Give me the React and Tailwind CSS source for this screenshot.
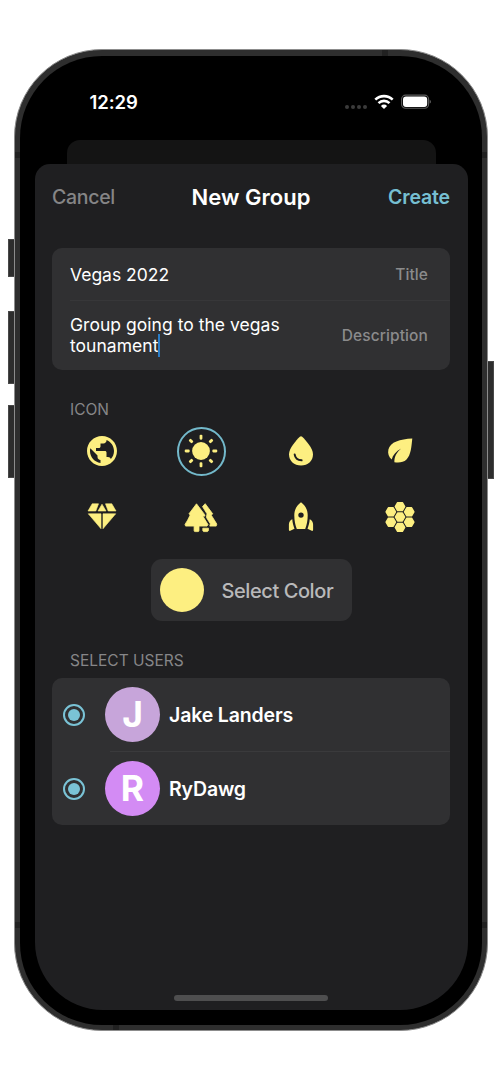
import { MdPublic } from "react-icons/md";

const FONT = "font-[Inter,'Liberation_Sans',sans-serif]";

function SunIcon() {
  return (
    <svg width="36" height="36" viewBox="-18 -18 36 36" fill="currentColor">
      <circle r="8.9" />
      {[0, 90, 180, 270].map((a) => (
        <rect key={a} x="-1.4" y="-16.3" width="2.8" height="5" rx="1.1" transform={`rotate(${a})`} />
      ))}
      {[45, 135, 225, 315].map((a) => (
        <rect key={a} x="-1.5" y="-16.3" width="3" height="4.4" rx="1.1" transform={`rotate(${a})`} />
      ))}
    </svg>
  );
}

function DropIcon() {
  return (
    <svg width="36" height="36" viewBox="-18 -18 36 36">
      <path
        fill="currentColor"
        d="M-1.2-14.2Q0-15.2 1.2-14.2C5-10.4 12-2.6 12 3.2C12 10 6.8 14.5 0 14.5S-12 10-12 3.2C-12-2.6-5-10.4-1.2-14.2Z"
      />
      <path d="M-6.3 3.6C-5.8 7-3.200 9 .6 9.300" fill="none" stroke="#1f1f21" strokeWidth="2" strokeLinecap="round" />
    </svg>
  );
}

function LeafIcon() {
  return (
    <svg width="36" height="36" viewBox="-18 -18 36 36">
      <path
        fill="currentColor"
        d="M12.300-12.500C11.500-5 11 4 6.500 8.500C3.500 11.500-1 11.800-5.600 11.200C-5.800 5.500-3.500 1.500 1.200-2.600C-4 .2-7.200 4-8.300 8.500C-11.200 6-12.500 2.500-11.600-1.500C-9.800-9 0-12 12.300-12.500Z"
      />
    </svg>
  );
}

function DiamondIcon() {
  return (
    <svg width="36" height="36" viewBox="-18 -18 36 36" fill="currentColor" stroke="currentColor" strokeWidth=".6" strokeLinejoin="round">
      <path d="M-9.800-13.200H-3.500L-6.200-6H-14Z" />
      <path d="M0-12.800L4-6H-4Z" />
      <path d="M3.500-13.200H9.800L14-6H6.200Z" />
      <path d="M-13.700-3.200H-1V11.700Z" />
      <path d="M1-3.200H13.700L1 11.700Z" />
    </svg>
  );
}

function TreesIcon() {
  return (
    <svg width="36" height="36" viewBox="-18 -18.600 36 36" fill="currentColor" stroke="currentColor" strokeWidth=".8" strokeLinejoin="round">
      <path d="M-4.500-13.800L-12-3.800L-10.800-2.600C-12.500 1-14 4-16 6.800L-15.400 8.500H-6.900V13Q-6.900 14-5.900 14H-3Q-2 14-2 13V8.500H6L7 7L1.800-1.500H4L3.500-3.200Z" />
      <path d="M1.500-11L4.200-13.900L11.700-3.800L10.300-2.400L15.800 6.500L15.200 8.500H8.800L9.300 6.200L5.400-.2L6-3.800Z" />
      <path d="M1.800 10.600H7.400V13L6.500 14H2.500L1.800 13Z" />
    </svg>
  );
}

function RocketIcon() {
  return (
    <svg width="36" height="36" viewBox="-18 -18 36 36" fill="currentColor">
      <path
        fillRule="evenodd"
        d="M0-14.800C4.500-11.500 6.700-7 6.700-1.500C6.700 4 5.700 8 4.200 12H-4.200C-5.700 8-6.700 4-6.700-1.500C-6.700-7-4.500-11.500 0-14.800ZM0-4.600A2.700 2.700 0 1 0 0 .8A2.700 2.700 0 1 0 0-4.600Z"
      />
      <path d="M-8.700 2.200C-8.500 5.400-7.700 8.500-6.500 11.700L-10.700 13.800Q-12.100 14.300-12.100 12.800V7.500C-12.100 4.800-10.700 3-8.700 2.200Z" />
      <path d="M8.700 2.200C8.500 5.400 7.700 8.500 6.500 11.700L10.700 13.800Q12.100 14.300 12.100 12.800V7.500C12.100 4.800 10.700 3 8.700 2.200Z" />
    </svg>
  );
}

function HoneycombIcon() {
  const cells = [[0, -10.4], [0, 0], [0, 10.4], [-9.2, -5.2], [-9.2, 5.2], [9.2, -5.2], [9.2, 5.2]];
  return (
    <svg width="36" height="36" viewBox="-18 -18 36 36" fill="currentColor" stroke="currentColor" strokeWidth="1.400" strokeLinejoin="round">
      {cells.map(([x, y]) => (
        <path key={`${x},${y}`} transform={`translate(${x} ${y})`} d="M-4.700 0L-2.400-4H2.400L4.700 0L2.400 4H-2.400Z" />
      ))}
    </svg>
  );
}

function WifiIcon() {
  return (
    <svg width="20" height="16" viewBox="0 0 20 16" fill="none" stroke="#fff" strokeWidth="2.600">
      <path d="M1.300 5.600A12.600 12.600 0 0 1 18.700 5.600" />
      <path d="M4.500 9.100A8 8 0 0 1 15.500 9.100" />
      <path d="M10 15L6.900 11.900A4.400 4.400 0 0 1 13.100 11.900Z" fill="#fff" stroke="none" />
    </svg>
  );
}

function BatteryIcon() {
  return (
    <svg width="31" height="16" viewBox="0 0 31 16">
      <rect x=".6" y="1.100" width="27" height="13.200" rx="4" fill="none" stroke="#5c5c5c" strokeWidth="1.100" />
      <rect x="2" y="2.500" width="24.200" height="10.400" rx="3" fill="#fff" />
      <path d="M28.600 5.800Q30 6.300 30 7.700T28.600 9.600Z" fill="#5c5c5c" />
    </svg>
  );
}

const ICONS = [
  { name: "globe", Icon: () => <MdPublic size={36} /> },
  { name: "sun", Icon: SunIcon, selected: true },
  { name: "drop", Icon: DropIcon },
  { name: "leaf", Icon: LeafIcon },
  { name: "diamond", Icon: DiamondIcon },
  { name: "trees", Icon: TreesIcon },
  { name: "rocket", Icon: RocketIcon },
  { name: "honeycomb", Icon: HoneycombIcon },
];

function UserRow({ initial, name, color }) {
  return (
    <div className="flex h-[73px] items-center pl-[11px]">
      <span className="flex size-[22px] shrink-0 items-center justify-center rounded-full border-2 border-[#7ac3d6]">
        <span className="size-3 rounded-full bg-[#7ac3d6]" />
      </span>
      <span className={`ml-5 flex size-[55px] shrink-0 items-center justify-center rounded-full pt-px text-[35.500px] font-bold leading-none text-white ${color}`}>
        {initial}
      </span>
      <span className="ml-[9px] pt-[2px] text-[19.500px] font-semibold tracking-[-0.15px] text-white">{name}</span>
    </div>
  );
}

function Sheet() {
  return (
    <div className="flex h-[846px] flex-col rounded-t-[15px] rounded-b-[68px] bg-[#1f1f21] px-[17.500px]">
      <header className="flex h-[66px] items-center justify-between">
        <span className="w-[90px] pt-[2px] text-[19.500px] font-medium tracking-[-0.3px] text-[#858586]">Cancel</span>
        <h1 className="text-[22px] font-semibold tracking-[0.02px] text-white">New Group</h1>
        <span className="w-[90px] pt-[2px] text-right text-[19.500px] font-semibold tracking-[-0.15px] text-[#76bfd2]">Create</span>
      </header>

      <section className="mt-[18px] h-[122px] rounded-[10px] bg-[#303032] text-[17.500px] leading-[21px] text-white">
        <div className="flex h-[52px] items-center justify-between pr-[22px] pl-[18px]">
          <span>Vegas 2022</span>
          <span className="text-[15.500px] font-medium tracking-[0.1px] text-[#8b8b8c]">Title</span>
        </div>
        <div className="ml-[18px] h-px bg-[#373739]" />
        <div className="flex h-[69px] items-center justify-between pr-[22px] pl-[18px]">
          <div className="-mt-[2px] w-[230px] tracking-[0.03px]">
            Group going to the vegas
            <span className="flex items-center">
              tounament
              <span className="-my-[1px] h-[23px] w-[2px] bg-[#2a7dc8]" />
            </span>
          </div>
          <span className="text-[15.500px] font-medium tracking-[0.1px] text-[#8b8b8c]">Description</span>
        </div>
      </section>

      <h2 className="mt-[29px] ml-[18px] translate-y-px text-[15.500px] leading-5 text-[#868688]">ICON</h2>
      <div className="-mt-px grid grid-cols-4 text-[#fdef81]">
        {ICONS.map(({ name, Icon, selected }) => (
          <div key={name} className="flex h-[66px] items-center justify-center">
            <div className={`flex size-[49px] items-center justify-center rounded-full ${selected ? "border-2 border-[#73b9cb]" : ""}`}>
              <Icon />
            </div>
          </div>
        ))}
      </div>

      <div className="mt-[9px] flex h-[62px] w-[201px] items-center self-center rounded-[11px] bg-[#303032] pl-[9px]">
        <span className="size-11 rounded-full bg-[#fdef81]" />
        <span className="ml-[18px] pt-px text-[20px] font-medium tracking-[-0.42px] text-[#b9b9ba]">Select Color</span>
      </div>

      <h2 className="mt-[30px] ml-[18px] text-[15.500px] leading-5 text-[#868688]">SELECT USERS</h2>
      <section className="mt-[7px] h-[147px] rounded-[10px] bg-[#303032]">
        <UserRow initial="J" name="Jake Landers" color="bg-[#c7a5da]" />
        <div className="ml-[58px] h-px bg-[#3a3a3c]" />
        <UserRow initial="R" name="RyDawg" color="bg-[#d38bf4]" />
      </section>

      <div className="mt-auto mb-[9px] h-[6px] w-[154px] self-center rounded-full bg-[#4e4e4f]" />
    </div>
  );
}

export default function App() {
  return (
    <div className={`flex h-[1080px] w-[500px] bg-white antialiased ${FONT}`}>
      <div className="relative mt-[49px] ml-[14px] h-[982px] w-[474px]">
        <div className="absolute top-[190px] -left-[6px] h-[38px] w-[7px] border border-[#484848] bg-[#2d2d2d]" />
        <div className="absolute top-[262px] -left-[6px] h-[73px] w-[7px] border border-[#484848] bg-[#2d2d2d]" />
        <div className="absolute top-[356px] -left-[6px] h-[73px] w-[7px] border border-[#484848] bg-[#2d2d2d]" />
        <div className="absolute top-[312px] -right-[6px] h-[118px] w-[7px] border border-[#484848] bg-[#2d2d2d]" />

        <div className="relative h-full rounded-[88px] border border-[#8c8c8c] bg-[#2e2e2e] p-[5px] pt-[6px]">
          <div className="absolute top-[102px] left-0 h-[6px] w-full bg-[#212121]" />
          <div className="absolute top-[872px] left-0 h-[6px] w-full bg-[#212121]" />
          <div className="absolute top-0 left-[367px] h-[7px] w-[6px] bg-[#212121]" />
          <div className="absolute bottom-0 left-[98px] h-[7px] w-[6px] bg-[#212121]" />
          <div className="relative flex h-full flex-col rounded-[82px] bg-black px-[14.500px]">
            <div className="flex h-[84px] items-start justify-between pt-[36px] pr-[36px] pl-[55px]">
              <span className="text-[18.500px] font-semibold leading-[21px] tracking-[-0.05px] text-white">12:29</span>
              <div className="flex items-center gap-[7px] pt-[2px]">
                <span className="flex gap-[2px] pt-[9px]">
                  {[0, 1, 2, 3].map((i) => (
                    <span key={i} className="size-1 rounded-full bg-[#3b3b3b]" />
                  ))}
                </span>
                <WifiIcon />
                <BatteryIcon />
              </div>
            </div>
            <div className="mx-[32px] h-6 rounded-t-[13px] bg-[#141414]" />
            <Sheet />
          </div>
        </div>
      </div>
    </div>
  );
}
